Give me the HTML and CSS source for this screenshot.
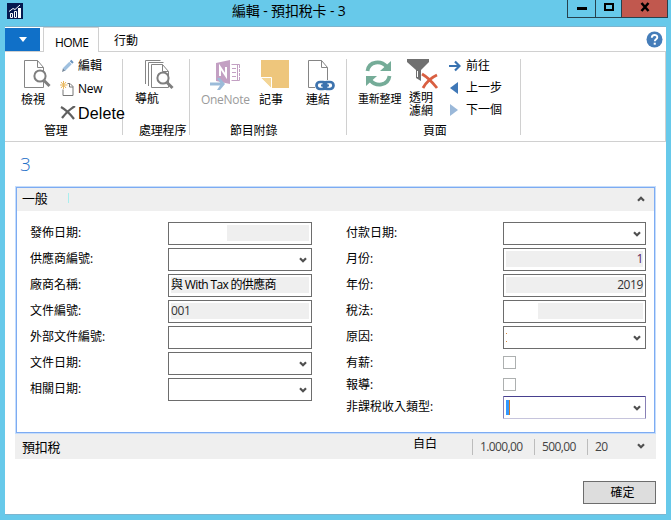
FILE: index.html
```html
<!DOCTYPE html>
<html lang="zh-Hant">
<head>
    <meta charset="UTF-8">
    <meta name="viewport" content="width=device-width, initial-scale=1.0">
    <title>編輯 - 預扣稅卡 - 3</title>
    <link rel="stylesheet" href="styles.css">
</head>
<body>
    <svg class="defs" width="0" height="0">
        <symbol id="chevron" viewBox="0 0 8 7"><path d="M1 1.2 L4 4.2 L7 1.2" fill="none" stroke="#505050" stroke-width="2.2"/></symbol>
        <symbol id="lens" viewBox="0 0 18 19"><circle cx="7" cy="7" r="5.6" fill="#fff" stroke="#7f7f7f" stroke-width="2"/><path d="M11 11.5 L16.5 17" stroke="#7f7f7f" stroke-width="3"/></symbol>
    </svg>
    <header class="titlebar">
        <svg class="logo" width="16" height="16"><rect width="16" height="16" fill="#06194f"/><path d="M3.500 10.500h2v4h-2zM7.500 8.500h2v6h-2z" fill="none" stroke="#fff"/><path d="M11 5h3v10h-3z" fill="#fff"/><path d="M2 8.500 L6 5.500 L8 6.500 L13 2" fill="none" stroke="#fff"/></svg>
        <h1>編輯 - 預扣稅卡 - 3</h1>
        <div class="controls">
            <button class="min"><svg width="10" height="10"><rect y="5" width="10" height="3"/></svg></button>
            <button class="max"><svg width="10" height="10"><rect x="1" y="2" width="8" height="6" fill="none" stroke="#000" stroke-width="2"/></svg></button>
            <button class="close"><svg width="10" height="10"><path d="M1.500 1l7 8M8.500 1l-7 8" stroke="#000" stroke-width="2.500"/></svg></button>
        </div>
    </header>

    <main class="window">
        <nav class="tabs">
            <button class="file"><svg width="8" height="5"><path d="M0 0h8L4 5z" fill="#fff"/></svg></button>
            <a class="tab active">HOME</a>
            <a class="tab">行動</a>
            <svg class="help" width="17" height="17"><circle cx="8.5" cy="8.5" r="8" fill="#457db9"/><path d="M5.8 6.8c0-3.8 5.5-3.5 5.5-.5 0 2-2.5 1.9-2.5 4" fill="none" stroke="#fff" stroke-width="1.9"/><rect x="7.7" y="11.7" width="2.1" height="2" fill="#fff"/></svg>
        </nav>

        <div class="ribbon">
            <section class="group manage">
                <div class="tools">
                    <div class="tool">
                        <svg width="28" height="29"><path d="M13.500 .5H.5v27h19v-20l-6-7v7h6" fill="#fff" stroke="#858585"/><use href="#lens" x="9" y="9" width="18" height="19"/></svg>
                        <span>檢視</span>
                    </div>
                    <ul class="list">
                        <li><svg width="16" height="14"><path d="M2 13l1-4 2.500 2.500z" fill="#789"/><path d="M4 10.500L10.500 4" stroke="#9fc0df" stroke-width="3.4"/><path d="M11 3.500l1.500-1.500" stroke="#6b95bf" stroke-width="3.4"/></svg>編輯</li>
                        <li class="latin"><svg width="16" height="16"><path d="M7.500 2.500h2.500l3 3v9h-10v-6M9.500 2.500v3.500h3.500" fill="none" stroke="#777"/><path d="M3.500 0v8M0 4h7.500M1 1l5 6M6 1l-5 6" stroke="#e9b85e"/></svg>New</li>
                        <li class="delete"><svg width="16" height="16"><path d="M1 1Q8 5 14 13M15 0Q7 5 2 12" fill="none" stroke="#606060" stroke-width="2.2"/></svg>Delete</li>
                    </ul>
                </div>
                <h2>管理</h2>
            </section>
            <section class="group process">
                <div class="tools">
                    <div class="tool">
                        <svg width="30" height="31"><path d="M.5 24V.5h15M3.500 26V2.500h15" fill="none" stroke="#858585"/><path d="M17.500 4.500h-11v23h17v-16l-6-7v7h6" fill="#fff" stroke="#858585"/><use href="#lens" x="11" y="11" width="18" height="19"/></svg>
                        <span>導航</span>
                    </div>
                </div>
                <h2>處理程序</h2>
            </section>
            <section class="group attach">
                <div class="tools">
                    <div class="tool onenote">
                        <svg width="32" height="31"><path d="M6 3L20 0v24L6 21z" fill="#c3a0c3"/><path d="M21.500 4.500h8v16h-8M22 8.500h4M22 12.500h4M22 16.500h4M27.500 5v15" stroke="#c3a0c3" fill="none"/><path d="M28 8.500h2M28 12.500h2M28 16.500h2" stroke="#fff"/><path d="M10 16V7l6 9V7" fill="none" stroke="#fff" stroke-width="2"/><path d="M0 24h12" stroke="#9bbbd9" stroke-width="3"/><path d="M7 18h3l5 6-5 6H7l4-6z" fill="#9bbbd9"/></svg>
                        <span>OneNote</span>
                    </div>
                    <div class="tool note">
                        <svg width="28" height="28"><path d="M0 0h28v28H11L0 17z" fill="#eec67c"/><path d="M0 17.500h10.500V28z" fill="#f3d596"/><path d="M0 17.500h10.500V28" fill="none" stroke="#fff"/></svg>
                        <span>記事</span>
                    </div>
                    <div class="tool link">
                        <svg width="27" height="31"><path d="M13.500.5H.5v27h19v-20l-6-7v7h6" fill="#fff" stroke="#858585"/><rect x="7" y="20" width="20" height="11" fill="#fff"/><g fill="none" stroke="#3d73ae" stroke-width="2.700"><rect x="8.500" y="22" width="10" height="7" rx="3.500"/><rect x="15.500" y="22" width="10" height="7" rx="3.500"/></g><path d="M13 25.500h8" stroke="#3d73ae" stroke-width="2"/></svg>
                        <span>連結</span>
                    </div>
                </div>
                <h2>節目附錄</h2>
            </section>
            <section class="group page">
                <div class="tools">
                    <div class="tool refresh">
                        <svg width="27" height="27"><g fill="none" stroke="#75ac98" stroke-width="3.800"><path d="M2.500 11C4 1 16 0 22 7"/><path d="M24.500 16C23 26 11 27 5 20"/></g><path d="M26 1v10H15zM1 26V16h11z" fill="#75ac98"/></svg>
                        <span>重新整理</span>
                    </div>
                    <div class="tool filter">
                        <svg width="32" height="31"><path d="M0 0h22v3l-8 8v11l-5-3v-8L0 3z" fill="#707070"/><path d="M10.500 12v6" stroke="#fff"/><path d="M15 15Q22 19 30 29M30 16Q21 20 16 29" fill="none" stroke="#d95f41" stroke-width="2.800"/></svg>
                        <span>透明<br>濾網</span>
                    </div>
                    <ul class="list">
                        <li><svg width="12" height="12"><path d="M0 6h9M6 1.500L10.500 6 6 10.500" fill="none" stroke="#3973b1" stroke-width="2.200"/></svg>前往</li>
                        <li><svg width="12" height="12"><path d="M9 0v12L1 6z" fill="#3f78b7"/></svg>上一步</li>
                        <li><svg width="12" height="12"><path d="M1 0v12l8-6z" fill="#9ab8d9"/></svg>下一個</li>
                    </ul>
                </div>
                <h2>頁面</h2>
            </section>
        </div>

        <div class="heading">3</div>

        <section class="fasttab">
            <header>
                <span>一般</span>
                <i class="tick"></i>
                <svg class="up" width="8" height="7"><use href="#chevron"/></svg>
            </header>
            <form class="form">
                <div class="column left">
                    <div class="row"><label>發佈日期:</label><div class="field"><span class="fill part"></span></div></div>
                    <div class="row"><label>供應商編號:</label><div class="field"><svg width="8" height="7"><use href="#chevron"/></svg></div></div>
                    <div class="row"><label>廠商名稱:</label><div class="field"><span class="fill vendor">與 With Tax 的供應商</span></div></div>
                    <div class="row"><label>文件編號:</label><div class="field"><span class="fill">001</span></div></div>
                    <div class="row"><label>外部文件編號:</label><div class="field"></div></div>
                    <div class="row"><label>文件日期:</label><div class="field"><svg width="8" height="7"><use href="#chevron"/></svg></div></div>
                    <div class="row"><label>相關日期:</label><div class="field"><svg width="8" height="7"><use href="#chevron"/></svg></div></div>
                </div>
                <div class="column right">
                    <div class="row"><label>付款日期:</label><div class="field"><svg width="8" height="7"><use href="#chevron"/></svg></div></div>
                    <div class="row"><label>月份:</label><div class="field"><span class="fill number one">1</span></div></div>
                    <div class="row"><label>年份:</label><div class="field"><span class="fill number">2019</span></div></div>
                    <div class="row"><label>稅法:</label><div class="field"><span class="fill law"></span></div></div>
                    <div class="row"><label>原因:</label><div class="field"><i class="dots"></i><svg width="8" height="7"><use href="#chevron"/></svg></div></div>
                    <div class="row check"><label>有薪:</label><span class="box"></span></div>
                    <div class="row check"><label>報導:</label><span class="box"></span></div>
                    <div class="row"><label>非課稅收入類型:</label><div class="field focus"><i class="selection"></i><svg width="8" height="7"><use href="#chevron"/></svg></div></div>
                </div>
            </form>
        </section>

        <section class="collapsed">
            <span class="name">預扣稅</span>
            <span class="kind">自白</span>
            <span class="value">1.000,00</span>
            <span class="value mid">500,00</span>
            <span class="value last">20</span>
            <svg width="8" height="7"><use href="#chevron"/></svg>
        </section>

        <footer><button class="ok">確定</button></footer>
    </main>
</body>
</html>
```
FILE: styles.css
```css
* {
    box-sizing: border-box;
}
body {
    margin: 0;
    width: 671px;
    height: 520px;
    overflow: hidden;
    background-color: #67c9ea;
    color: #000;
    font-family: "Open Sans", "Noto Sans CJK TC", sans-serif;
    font-size: 12px;
    line-height: 16px;
}
h1, h2, ul {
    margin: 0;
    padding: 0;
    font-weight: normal;
    list-style: none;
}
button {
    padding: 0;
    border: none;
    font-family: inherit;
}
svg {
    display: block;
    flex: none;
}
.defs {
    position: absolute;
}

/* title bar */
.titlebar {
    display: flex;
    height: 26px;
    padding-left: 7px;
}
.logo {
    margin-top: 3px;
}
.titlebar h1 {
    width: 335px;
    margin-left: 209px;
    padding-top: 1px;
    font-size: 14px;
    line-height: 20px;
    letter-spacing: -0.15px;
    white-space: nowrap;
}
.controls {
    display: flex;
    height: 18px;
}
.controls button {
    display: flex;
    align-items: center;
    justify-content: center;
    width: 29px;
    height: 18px;
    padding-bottom: 3px;
    border: 1px solid #26414d;
    border-top: none;
    background-color: #67c9ea;
}
.controls .max {
    width: 26px;
    border-left: none;
}
.controls .close {
    width: 46px;
    border-left: none;
    background-color: #c1584e;
}

/* window and tabs */
.window {
    display: flex;
    flex-direction: column;
    width: 661px;
    height: 489px;
    margin-left: 5px;
    border-top: 1px solid #7db5cf;
    border-bottom: 1px solid #7db5cf;
    background-color: #fff;
}
.tabs {
    display: flex;
    align-items: flex-end;
    height: 25px;
    border-bottom: 1px solid #d0d0d0;
}
.file {
    display: flex;
    align-items: center;
    justify-content: center;
    width: 35px;
    height: 23px;
    margin-right: 3px;
    background-color: #1070c8;
}
.tab {
    width: 56px;
    height: 24px;
    padding-left: 12px;
    line-height: 27px;
    letter-spacing: -0.6px;
}
.tab.active {
    height: 25px;
    margin-bottom: -1px;
    padding-left: 11px;
    border: 1px solid #d0d0d0;
    border-bottom: none;
    background-color: #fff;
    line-height: 29px;
}
.tab + .tab {
    padding-left: 15px;
    letter-spacing: 0;
}
.help {
    margin: 0 3px 3px auto;
}

/* ribbon */
.ribbon {
    display: flex;
    height: 90px;
    padding-top: 7px;
    border-right: 1px solid #d0d0d0;
    border-bottom: 1px solid #d0d0d0;
}
.group {
    height: 76px;
    border-right: 1px solid #d0d0d0;
}
.tools {
    display: flex;
    height: 64px;
}
.tool {
    flex: none;
}
.tool span {
    display: block;
    white-space: nowrap;
}
.tool svg {
    margin-bottom: 1px;
}
.group h2 {
    font-size: 12px;
    line-height: 16px;
    letter-spacing: -0.2px;
}
.list li {
    display: flex;
    align-items: center;
    height: 22px;
    white-space: nowrap;
}
.manage {
    width: 118px;
    padding-left: 16px;
}
.manage .tool {
    width: 39px;
    padding-top: 1px;
}
.manage .tool svg {
    margin-left: 3px;
    margin-bottom: 3px;
}
.manage .list {
    margin-top: -4px;
}
.manage .list svg {
    margin-right: 2px;
}
.manage .list .latin {
    height: 24px;
    letter-spacing: -0.2px;
}
.manage .list .delete {
    height: 25px;
    font-family: "Liberation Sans", sans-serif;
    font-size: 16px;
    letter-spacing: 0.15px;
}
.manage h2 {
    padding-left: 23px;
}
.process {
    width: 67px;
    padding-left: 12px;
}
.process .tool svg {
    margin-left: 10px;
    margin-bottom: 0;
}
.process .tools {
    padding-top: 1px;
}
.process h2 {
    padding-left: 4px;
}
.attach {
    width: 157px;
    padding-left: 11px;
}
.attach .tool {
    width: 58px;
    padding-top: 1px;
}
.attach .tool + .tool {
    width: 47px;
}
.attach .tool svg {
    height: 31px;
    margin-left: 2px;
}
.attach .onenote svg {
    margin-left: 9px;
}
.onenote span {
    color: #9b9b9b;
    letter-spacing: -0.3px;
}
.attach h2 {
    padding-left: 29px;
}
.page {
    width: 174px;
    padding-left: 11px;
}
.page .tool {
    width: 51px;
    padding-top: 1px;
}
.refresh svg {
    margin-left: 7px;
    margin-bottom: 4px;
}
.refresh span {
    font-size: 11px;
    letter-spacing: -0.2px;
}
.page .filter {
    width: 40px;
    padding-top: 0;
}
.filter svg {
    margin-left: -2px;
}
.filter span {
    line-height: 13px;
}
.page .list {
    margin-top: -4px;
}
.page .list svg {
    margin-right: 5px;
}
.page h2 {
    padding-left: 65px;
}

.heading {
    height: 44px;
    padding: 10px 0 0 15px;
    color: #1f70c8;
    font-size: 19px;
    font-weight: 300;
    line-height: 24px;
}

/* expanded section */
.fasttab {
    width: 641px;
    height: 248px;
    margin-left: 10px;
    border: 1px solid #c5ddfb;
    outline: 1px solid #7dabf2;
    outline-offset: -2px;
}
.fasttab header {
    display: flex;
    align-items: center;
    height: 23px;
    margin: 1px;
    padding: 0 9px 3px 5px;
    background-color: #efefef;
    font-size: 13px;
    letter-spacing: -0.3px;
}
.tick {
    width: 1px;
    height: 10px;
    margin-left: 21px;
    background-color: #a9eeee;
}
.up {
    margin-left: auto;
    transform: rotate(180deg);
}
.form {
    display: flex;
    padding: 10px 0 0 14px;
}
.column {
    display: flex;
    flex: none;
    flex-direction: column;
    gap: 3px;
    width: 316px;
}
.right {
    width: 300px;
}
.row {
    display: flex;
    height: 23px;
}
.row label {
    width: 138px;
    line-height: 21px;
    white-space: nowrap;
}
.right .row label {
    width: 157px;
}
.field {
    display: flex;
    align-items: center;
    width: 144px;
    height: 23px;
    padding: 2px;
    border: 1px solid #6d6d6d;
}
.right .field {
    width: 143px;
}
.field svg {
    margin: 2px 2px 0 auto;
}
.fill {
    width: 100%;
    height: 16px;
    margin-bottom: 1px;
    background-color: #efefef;
    line-height: 16px;
    white-space: nowrap;
    letter-spacing: -0.4px;
    color: #333;
}
.vendor {
    color: #000;
    letter-spacing: -0.65px;
}
.fill.part {
    width: 82px;
    margin-left: auto;
}
.number {
    text-align: right;
}
.one {
    color: #5b1c5b;
}
.law {
    border-left: 32px solid #fff;
}
.dots {
    width: 1px;
    height: 9px;
    border-top: 1px solid #d98a3a;
    border-bottom: 1px solid #d98a3a;
}
.check {
    height: 19px;
}
.check .box {
    width: 13px;
    height: 13px;
    margin-top: 4px;
    border: 1px solid #adb0b0;
}
.focus {
    border-color: #48408f #8880b5 #c6c4dc #8880b5;
    border-radius: 1px;
}
.selection {
    width: 4px;
    height: 15px;
    border-right: 1px solid #d07a2a;
    background-color: #3399ff;
}

/* collapsed section */
.collapsed {
    display: flex;
    align-items: center;
    width: 641px;
    height: 25px;
    margin-left: 10px;
    padding: 0 11px 0 7px;
    background-color: #efefef;
}
.collapsed .name {
    width: 391px;
    font-size: 13px;
    letter-spacing: -0.3px;
}
.collapsed .kind {
    width: 59px;
    margin-bottom: 5px;
}
.value {
    width: 62px;
    padding-left: 7px;
    border-left: 1px solid #bcbcbc;
    color: #444;
    letter-spacing: -0.6px;
}
.value.mid {
    width: 53px;
}
.value.last {
    width: 40px;
}
.collapsed svg {
    margin-left: auto;
}

footer {
    display: flex;
    justify-content: flex-end;
    padding: 22px 10px 0 0;
}
.ok {
    width: 73px;
    height: 23px;
    padding: 0 0 2px 6px;
    border: 1px solid #6d6d6d;
    background-color: #ddd;
    font-size: 12px;
}
```
